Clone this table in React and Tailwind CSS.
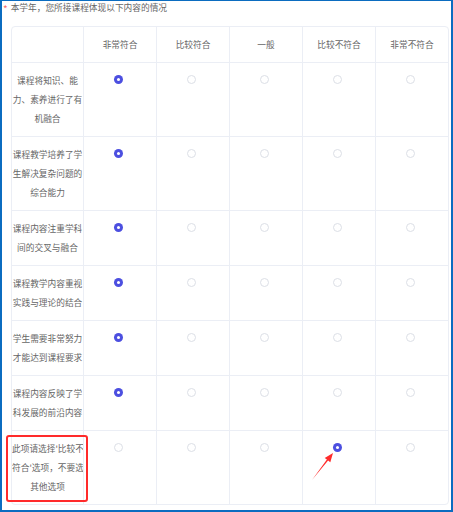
import React from "react";

const columns = ["非常符合", "比较符合", "一般", "比较不符合", "非常不符合"];

const rows = [
    { lines: ["课程将知识、能", "力、素养进行了有", "机融合"], pick: 0 },
    { lines: ["课程教学培养了学", "生解决复杂问题的", "综合能力"], pick: 0 },
    { lines: ["课程内容注重学科", "间的交叉与融合"], pick: 0 },
    { lines: ["课程教学内容重视", "实践与理论的结合"], pick: 0 },
    { lines: ["学生需要非常努力", "才能达到课程要求"], pick: 0 },
    { lines: ["课程内容反映了学", "科发展的前沿内容"], pick: 0 },
    { lines: ["此项请选择'比较不", "符合'选项，不要选", "其他选项"], pick: 3 },
];

function Radio({ checked }) {
    if (checked) {
        return (
            <span className="w-[9px] h-[9px] rounded-full bg-[#4c4fe0] flex items-center justify-center">
                <span className="w-[3px] h-[3px] rounded-full bg-white" />
            </span>
        );
    }
    return <span className="w-[9px] h-[9px] rounded-full border border-[#dcdfe6] bg-white block" />;
}

export default function App() {
    return (
        <div className="w-[453px] h-[512px] bg-white border-l-2 border-t border-r-2 border-b-2 border-[#0b6cc0] relative overflow-hidden font-['Noto_Sans_CJK_SC',sans-serif] text-[8.7px] text-[#666666]">
            <div className="h-[13px] flex items-center pl-[1px]">
                <span className="text-[#f56c6c] text-[10px] mr-[3px] leading-none self-start mt-[3px]">*</span>
                <span>本学年，您所接课程体现以下内容的情况</span>
            </div>

            <div className="ml-[9px] mt-[12px] w-[438px] border border-[#ebeef5] rounded-[4px] overflow-hidden">
                <div className="grid grid-cols-[71px_73px_73px_73px_73px_73px] h-[36px] border-b border-[#ebeef5]">
                    <div />
                    {columns.map((c) => (
                        <div key={c} className="border-l border-[#ebeef5] flex items-center justify-center">
                            {c}
                        </div>
                    ))}
                </div>
                {rows.map((r, i) => (
                    <div
                        key={i}
                        className={`grid grid-cols-[71px_73px_73px_73px_73px_73px] ${i < rows.length - 1 ? "border-b border-[#ebeef5]" : ""}`}
                    >
                        <div className="py-2 text-center leading-[19px] whitespace-nowrap">
                            {r.lines.map((l) => (
                                <div key={l}>{l}</div>
                            ))}
                        </div>
                        {columns.map((c, j) => (
                            <div key={c} className="border-l border-[#ebeef5] flex justify-center pt-[12px] pr-[3px]">
                                <Radio checked={j === r.pick} />
                            </div>
                        ))}
                    </div>
                ))}
            </div>

            <div className="absolute left-[4px] top-[434px] w-[82px] h-[67px] border-2 border-[#ff2b2b] rounded-[3px] pointer-events-none" />

            <svg className="absolute left-[-2px] top-[-1px] pointer-events-none" width="453" height="512">
                <polygon
                    points="312,480 328.1,460.6 330.3,462.2 333,453 324.7,458 326.9,459.6"
                    fill="#ff2b2b"
                />
            </svg>
        </div>
    );
}
